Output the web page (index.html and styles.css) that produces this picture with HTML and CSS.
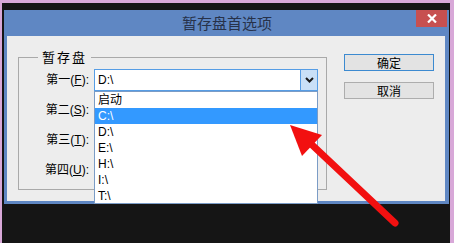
FILE: index.html
```html
<!DOCTYPE html>
<html lang="zh-CN">
<head>
  <meta charset="UTF-8">
  <title>暂存盘首选项</title>
  <link rel="stylesheet" href="styles.css">
</head>
<body>
  <div class="screen">
    <div class="dialog">
      <!-- Title bar -->
      <div class="titlebar">
        <span class="title">暂存盘首选项</span>
        <button class="close" aria-label="关闭">
          <svg width="10" height="9" viewBox="0 0 10 9">
            <path d="M1 0.5 L9 8.5 M9 0.5 L1 8.5" stroke="#fff" stroke-width="2.2"/>
          </svg>
        </button>
      </div>

      <div class="content">
        <fieldset class="scratch">
          <legend>暂存盘</legend>
          <div class="rows">
            <label>第一(<u>F</u>):</label>
            <div class="combo focused">
              <span class="value">D:\</span>
              <span class="drop">
                <svg width="9" height="6" viewBox="0 0 9 6">
                  <path d="M1 1 L4.5 4.5 L8 1" fill="none" stroke="#1a1a1a" stroke-width="2"/>
                </svg>
              </span>
              <ul class="list">
                <li>启动</li>
                <li class="sel">C:\</li>
                <li>D:\</li>
                <li>E:\</li>
                <li>H:\</li>
                <li>I:\</li>
                <li>T:\</li>
              </ul>
            </div>

            <label>第二(<u>S</u>):</label>
            <div class="combo"><span class="value"></span><span class="drop"></span></div>

            <label>第三(<u>T</u>):</label>
            <div class="combo"><span class="value"></span><span class="drop"></span></div>

            <label>第四(<u>U</u>):</label>
            <div class="combo"><span class="value"></span><span class="drop"></span></div>
          </div>
        </fieldset>

        <div class="actions">
          <button class="btn default">确定</button>
          <button class="btn">取消</button>
        </div>
      </div>
    </div>
  </div>

  <!-- red annotation arrow -->
  <svg class="annotation" width="454" height="243" viewBox="0 0 454 243">
    <line x1="395" y1="223" x2="309" y2="142" stroke="#f21010" stroke-width="7" stroke-linecap="round"/>
    <polygon points="290,125 302,156 322,135" fill="#f21010"/>
  </svg>
</body>
</html>
```

FILE: styles.css
```css
body {
  margin: 0;
  background: #d8a8d8;
  font-family: "Liberation Sans", "Noto Sans CJK SC", sans-serif;
  font-size: 12px;
  color: #000;
  position: relative;
  width: 454px;
  height: 243px;
  overflow: hidden;
}

/* dark desktop behind the dialog */
.screen {
  margin: 3px 4px 0 2px;
  height: 240px;
  box-sizing: border-box;
  padding: 7px 0 0 2px;
  background: #151515;
}

.dialog {
  width: 445px;
  height: 194px;
  box-sizing: border-box;
  padding: 0 4px 3px 3px;
  background: #5f87c3;
  display: flex;
  flex-direction: column;
}

/* Title bar */
.titlebar {
  height: 26px;
  margin: 0 -4px 0 -3px;
  display: flex;
  align-items: flex-start;
}

.title {
  flex: 1;
  padding-left: 34px;
  text-align: center;
  line-height: 25px;
  font-family: "Noto Sans CJK SC", sans-serif;
  font-size: 15px;
  color: #27324a;
}

.close {
  width: 31px;
  height: 17px;
  margin-right: 2px;
  padding: 0;
  border: none;
  background: #c75050;
  display: flex;
  justify-content: center;
  align-items: center;
}

/* Dialog body */
.content {
  height: 165px;
  background: #ededed;
  display: flex;
  align-items: flex-start;
}

.scratch {
  margin: 13px 0 0 11px;
  padding: 0 8px 0 0;
  width: 309px;
  height: 141px;
  box-sizing: border-box;
  border: 1px solid #a9a9a9;
  min-width: 0;
}

.scratch legend {
  margin-left: 19px;
  padding: 0 4px;
  font-family: "Noto Sans CJK SC", sans-serif;
  font-size: 13px;
  line-height: 16px;
  letter-spacing: 2px;
}

.rows {
  margin-top: 4px;
  display: grid;
  grid-template-columns: 70px 224px;
  grid-auto-rows: 22px;
  column-gap: 5px;
  row-gap: 8px;
}

.rows label {
  justify-self: end;
  align-self: center;
  line-height: 22px;
}

.rows label u {
  text-underline-offset: 1px;
}

/* Combo boxes */
.combo {
  position: relative;
  display: flex;
  height: 22px;
  box-sizing: border-box;
  border: 1px solid #acacac;
  background: #fff;
}

.combo .value {
  flex: 1;
  padding-left: 3px;
  line-height: 20px;
}

.combo .drop {
  width: 16px;
  border-left: 1px solid #acacac;
  background: #e5e5e5;
  display: flex;
  justify-content: center;
  align-items: center;
}

.combo.focused {
  border-color: #569de5;
}

.combo.focused .drop {
  border-left-color: #569de5;
  background: #c9e0f7;
}

/* Open drop-down list */
.list {
  position: absolute;
  top: 21px;
  left: -1px;
  z-index: 2;
  width: 224px;
  height: 113px;
  box-sizing: border-box;
  margin: 0;
  padding: 0;
  list-style: none;
  background: #fff;
  border: 1px solid #7b9cc6;
  overflow: hidden;
}

.list li {
  height: 16px;
  line-height: 16px;
  padding-left: 3px;
  font-size: 12px;
}

.list li.sel {
  background: #3399ff;
  color: #fff;
}

/* Buttons */
.actions {
  margin: 18px 0 0 17px;
  display: flex;
  flex-direction: column;
  gap: 11px;
}

.btn {
  width: 90px;
  height: 17px;
  box-sizing: border-box;
  padding: 0;
  border: 1px solid #adadad;
  background: #e3e3e3;
  font-family: "Noto Sans CJK SC", sans-serif;
  font-size: 12px;
  line-height: 15px;
  color: #000;
}

.btn.default {
  border-color: #3c8ad0;
}

.annotation {
  position: absolute;
  top: 0;
  left: 0;
  z-index: 10;
  pointer-events: none;
}
```
